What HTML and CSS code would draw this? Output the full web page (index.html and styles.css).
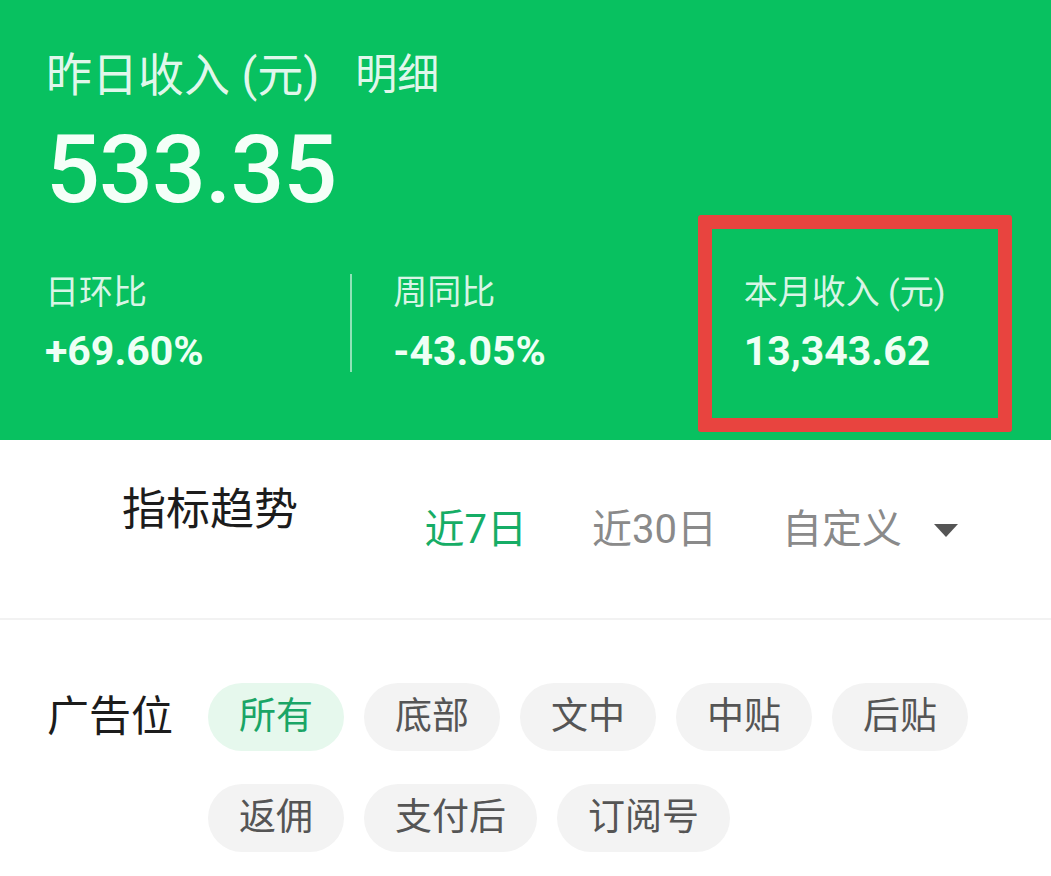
FILE: index.html
```html
<!DOCTYPE html>
<html lang="zh-CN">
<head>
<meta charset="utf-8">
<title>收入</title>
<link rel="stylesheet" href="styles.css">
</head>
<body>
<div class="page">
  <section class="header">
    <div class="title-row">
      <span class="title">昨日收入 (元)</span>
      <span class="detail">明细</span>
    </div>
    <div class="amount">533.35</div>
    <div class="stats">
      <div class="stat">
        <div class="stat-label">日环比</div>
        <div class="stat-value">+69.60%</div>
      </div>
      <div class="stat stat-div">
        <div class="stat-label">周同比</div>
        <div class="stat-value">-43.05%</div>
      </div>
      <div class="stat stat-div">
        <div class="stat-label">本月收入 (元)</div>
        <div class="stat-value">13,343.62</div>
      </div>
    </div>
    <div class="highlight"></div>
  </section>

  <section class="trend">
    <div class="trend-title">指标趋势</div>
    <div class="tabs">
      <span class="tab active">近7日</span>
      <span class="tab">近30日</span>
      <span class="tab">自定义</span>
      <span class="caret"></span>
    </div>
  </section>

  <section class="filter">
    <div class="filter-label">广告位</div>
    <div class="chips">
      <span class="chip active">所有</span>
      <span class="chip">底部</span>
      <span class="chip">文中</span>
      <span class="chip">中贴</span>
      <span class="chip">后贴</span>
      <span class="chip">返佣</span>
      <span class="chip">支付后</span>
      <span class="chip">订阅号</span>
    </div>
  </section>
</div>
</body>
</html>
```

FILE: styles.css
```css
* { box-sizing: border-box; }
html, body { margin: 0; padding: 0; background: #ffffff; }
body {
  font-family: Roboto, "Noto Sans CJK SC", "Noto Sans", sans-serif;
  width: 1051px;
  height: 876px;
  overflow: hidden;
}
.page { width: 1051px; }

.header {
  position: relative;
  height: 440px;
  background: #08c160;
  padding-top: 50px;
  color: rgba(255, 255, 255, 0.9);
}
.title-row {
  padding-left: 46px;
  height: 50px;
  line-height: 50px;
  display: flex;
  align-items: center;
}
.title { font-size: 46px; }
.detail { font-size: 42px; margin-left: 36px; }

.amount {
  padding-left: 46px;
  margin-top: 22px;
  font-size: 95px;
  line-height: 96px;
  font-weight: 500;
  color: #f4fff8;
  letter-spacing: -1px;
}

.stats {
  margin-top: 56px;
  display: grid;
  grid-template-columns: repeat(3, 1fr);
}
.stat { padding-left: 45px; }
.stat-div {
  padding-left: 41px;
  border-left: 2px solid rgba(255, 255, 255, 0.55);
}
.stat-label {
  font-size: 34px;
  line-height: 36px;
  color: rgba(255, 255, 255, 0.85);
}
.stat-value {
  margin-top: 20px;
  font-size: 41px;
  line-height: 42px;
  font-weight: 700;
  color: #eefff5;
}

.highlight {
  position: absolute;
  left: 698px;
  top: 215px;
  width: 314px;
  height: 217px;
  border: 14px solid #e8443f;
  border-radius: 3px;
}

.trend {
  height: 180px;
  border-bottom: 2px solid #f2f2f2;
  display: flex;
  align-items: flex-start;
  padding-left: 122px;
  padding-right: 93px;
}
.trend-title {
  margin-top: 45px;
  font-size: 44px;
  line-height: 50px;
  color: #1c1c1c;
}
.tabs {
  margin-left: auto;
  margin-top: 65px;
  display: flex;
  align-items: center;
  height: 50px;
}
.tab {
  font-size: 40px;
  line-height: 50px;
  color: #8a8a8a;
  margin-right: 65px;
}
.tab:nth-child(3) { margin-right: 32px; }
.tab.active { color: #16ad66; }
.caret {
  width: 0;
  height: 0;
  border-left: 12px solid transparent;
  border-right: 12px solid transparent;
  border-top: 13px solid #555555;
}

.filter {
  display: flex;
  align-items: flex-start;
  padding-top: 63px;
  padding-left: 47px;
}
.filter-label {
  font-size: 42px;
  line-height: 68px;
  height: 68px;
  color: #1c1c1c;
  width: 161px;
}
.chips {
  flex: 1;
  display: flex;
  flex-wrap: wrap;
  gap: 33px 20px;
}
.chip {
  height: 68px;
  line-height: 68px;
  padding: 0 31px;
  border-radius: 34px;
  background: #f3f3f3;
  color: #555555;
  font-size: 37px;
}
.chip.active {
  background: #e6f8ed;
  color: #1aa566;
}
```
